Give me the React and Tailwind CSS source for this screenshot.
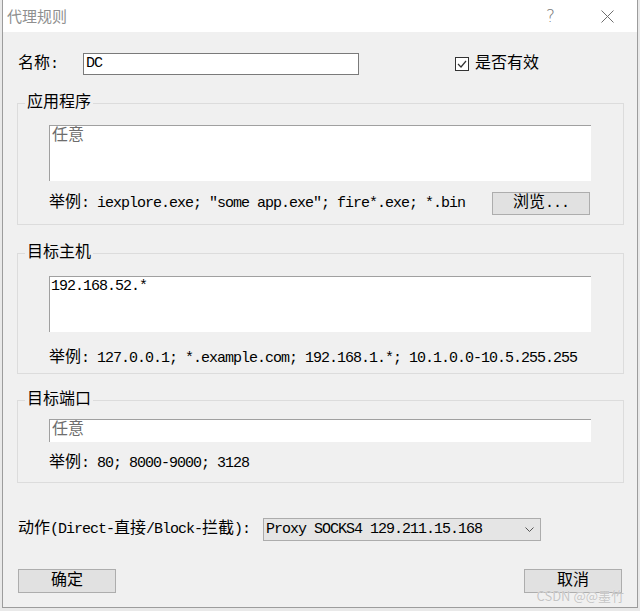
const CJK = /([\u3000-\u9fff\uff00-\uffef]+)/;

function T({ children }) {
  const parts = String(children).split(CJK);
  return (
    <>
      {parts.map((p, i) =>
        CJK.test(p) ? (
          <span
            key={i}
            className="text-[16px] leading-[10px] tracking-[0px] font-['Noto_Sans_CJK_SC',sans-serif]"
          >
            {p}
          </span>
        ) : (
          <span key={i}>{p}</span>
        )
      )}
    </>
  );
}

function Group({ title, children, className = "" }) {
  return (
    <fieldset className={`ml-[14px] w-[607px] border border-[#dcdcdc] ${className}`}>
      <legend className="ml-[7px] px-[2px] leading-[16px]">
        <T>{title}</T>
      </legend>
      {children}
    </fieldset>
  );
}

function Button({ children, className = "" }) {
  return (
    <div
      className={`flex items-center justify-center bg-[#e1e1e1] border border-[#adadad] ${className}`}
    >
      <span>
        <T>{children}</T>
      </span>
    </div>
  );
}

export default function App() {
  return (
    <div className="w-[640px] h-[611px] bg-[#e9e9e9] overflow-hidden font-['Liberation_Mono','Noto_Sans_CJK_SC',monospace] text-[15px] tracking-[-1px] leading-[16px] text-black">
      <div className="relative ml-[2px] w-[636px] h-[608px] border-x border-b border-[#9c9c9c] bg-[#f0f0f0]">
        {/* title bar */}
        <div className="h-[32px] bg-white flex items-center pl-[4px] tracking-normal">
          <span className="text-[15px] text-[#8f8f8f] font-['Noto_Sans_CJK_SC',sans-serif]">代理规则</span>
          <span className="ml-auto mr-[46px] text-[17px] text-[#7a7a7a] font-['DejaVu_Sans',sans-serif] font-light">
            ?
          </span>
          <svg width="13" height="13" viewBox="0 0 13 13" className="mr-[23px]">
            <path d="M0.5 0.5 L12.5 12.5 M12.5 0.5 L0.5 12.5" stroke="#6e6e6e" strokeWidth="1" fill="none" />
          </svg>
        </div>

        {/* name row */}
        <div className="flex items-center mt-[21px] pl-[15px] h-[22px]">
          <div className="w-[65px]">
            <T>名称:</T>
          </div>
          <div className="w-[276px] h-[22px] bg-white border border-[#7a7a7a] flex items-center pl-[2px]">
            DC
          </div>
          <div className="ml-[96px] flex items-center">
            <div className="w-[14px] h-[14px] border border-[#333] bg-white flex items-center justify-center">
              <svg width="10" height="10" viewBox="0 0 10 10">
                <path d="M1 5 L4 8 L9 2" stroke="#333" strokeWidth="1.2" fill="none" />
              </svg>
            </div>
            <span className="ml-[6px]">
              <T>是否有效</T>
            </span>
          </div>
        </div>

        {/* applications */}
        <Group title="应用程序" className="mt-[20px] pb-[9px]">
          <div className="ml-[31px] mt-[13px] w-[542px] h-[56px] bg-white border-t border-l border-[#a0a0a0] pl-[2px] pt-[2px] text-[#6d6d6d]">
            <T>任意</T>
          </div>
          <div className="ml-[31px] mt-[11px] w-[541px] flex items-center justify-between">
            <span className="whitespace-pre">
              <T>举例: iexplore.exe; ″some app.exe″; fire*.exe; *.bin</T>
            </span>
            <Button className="w-[98px] h-[23px]">浏览...</Button>
          </div>
        </Group>

        {/* target hosts */}
        <Group title="目标主机" className="mt-[20px] pb-[6px]">
          <div className="ml-[31px] mt-[14px] w-[542px] h-[56px] bg-white border-t border-l border-[#a0a0a0] pl-[1px] pt-[2px]">
            192.168.52.*
          </div>
          <div className="ml-[31px] mt-[18px] whitespace-pre">
            <T>举例: 127.0.0.1; *.example.com; 192.168.1.*; 10.1.0.0-10.5.255.255</T>
          </div>
        </Group>

        {/* target ports */}
        <Group title="目标端口" className="mt-[18px] pb-[10px]">
          <div className="ml-[31px] mt-[10px] w-[542px] h-[23px] bg-white border-t border-l border-[#a0a0a0] pl-[2px] pt-[2px] text-[#6d6d6d]">
            <T>任意</T>
          </div>
          <div className="ml-[31px] mt-[13px] whitespace-pre">
            <T>举例: 80; 8000-9000; 3128</T>
          </div>
        </Group>

        {/* action row */}
        <div className="flex items-center mt-[35px] pl-[15px]">
          <div className="w-[245px] whitespace-pre">
            <T>动作(Direct-直接/Block-拦截):</T>
          </div>
          <div className="w-[278px] h-[23px] bg-[#e5e5e5] border border-[#acacac] flex items-center pl-[2px]">
            <span className="whitespace-pre">Proxy SOCKS4 129.211.15.168</span>
            <svg width="9" height="6" viewBox="0 0 9 6" className="ml-auto mr-[6px]">
              <path d="M0.5 0.5 L4.5 4.5 L8.5 0.5" stroke="#555" strokeWidth="1" fill="none" />
            </svg>
          </div>
        </div>

        {/* buttons */}
        <div className="flex items-center justify-between mt-[28px] pl-[15px] pr-[15px]">
          <Button className="w-[98px] h-[24px]">确定</Button>
          <Button className="w-[98px] h-[24px]">取消</Button>
        </div>

        <div className="absolute right-[13px] bottom-[4px] text-[13px] leading-[14px] tracking-normal text-[#c4c4c4] font-['Noto_Sans_CJK_SC',sans-serif] [text-shadow:0_0_1px_#fff]">
          CSDN @@墨竹
        </div>
      </div>
    </div>
  );
}
